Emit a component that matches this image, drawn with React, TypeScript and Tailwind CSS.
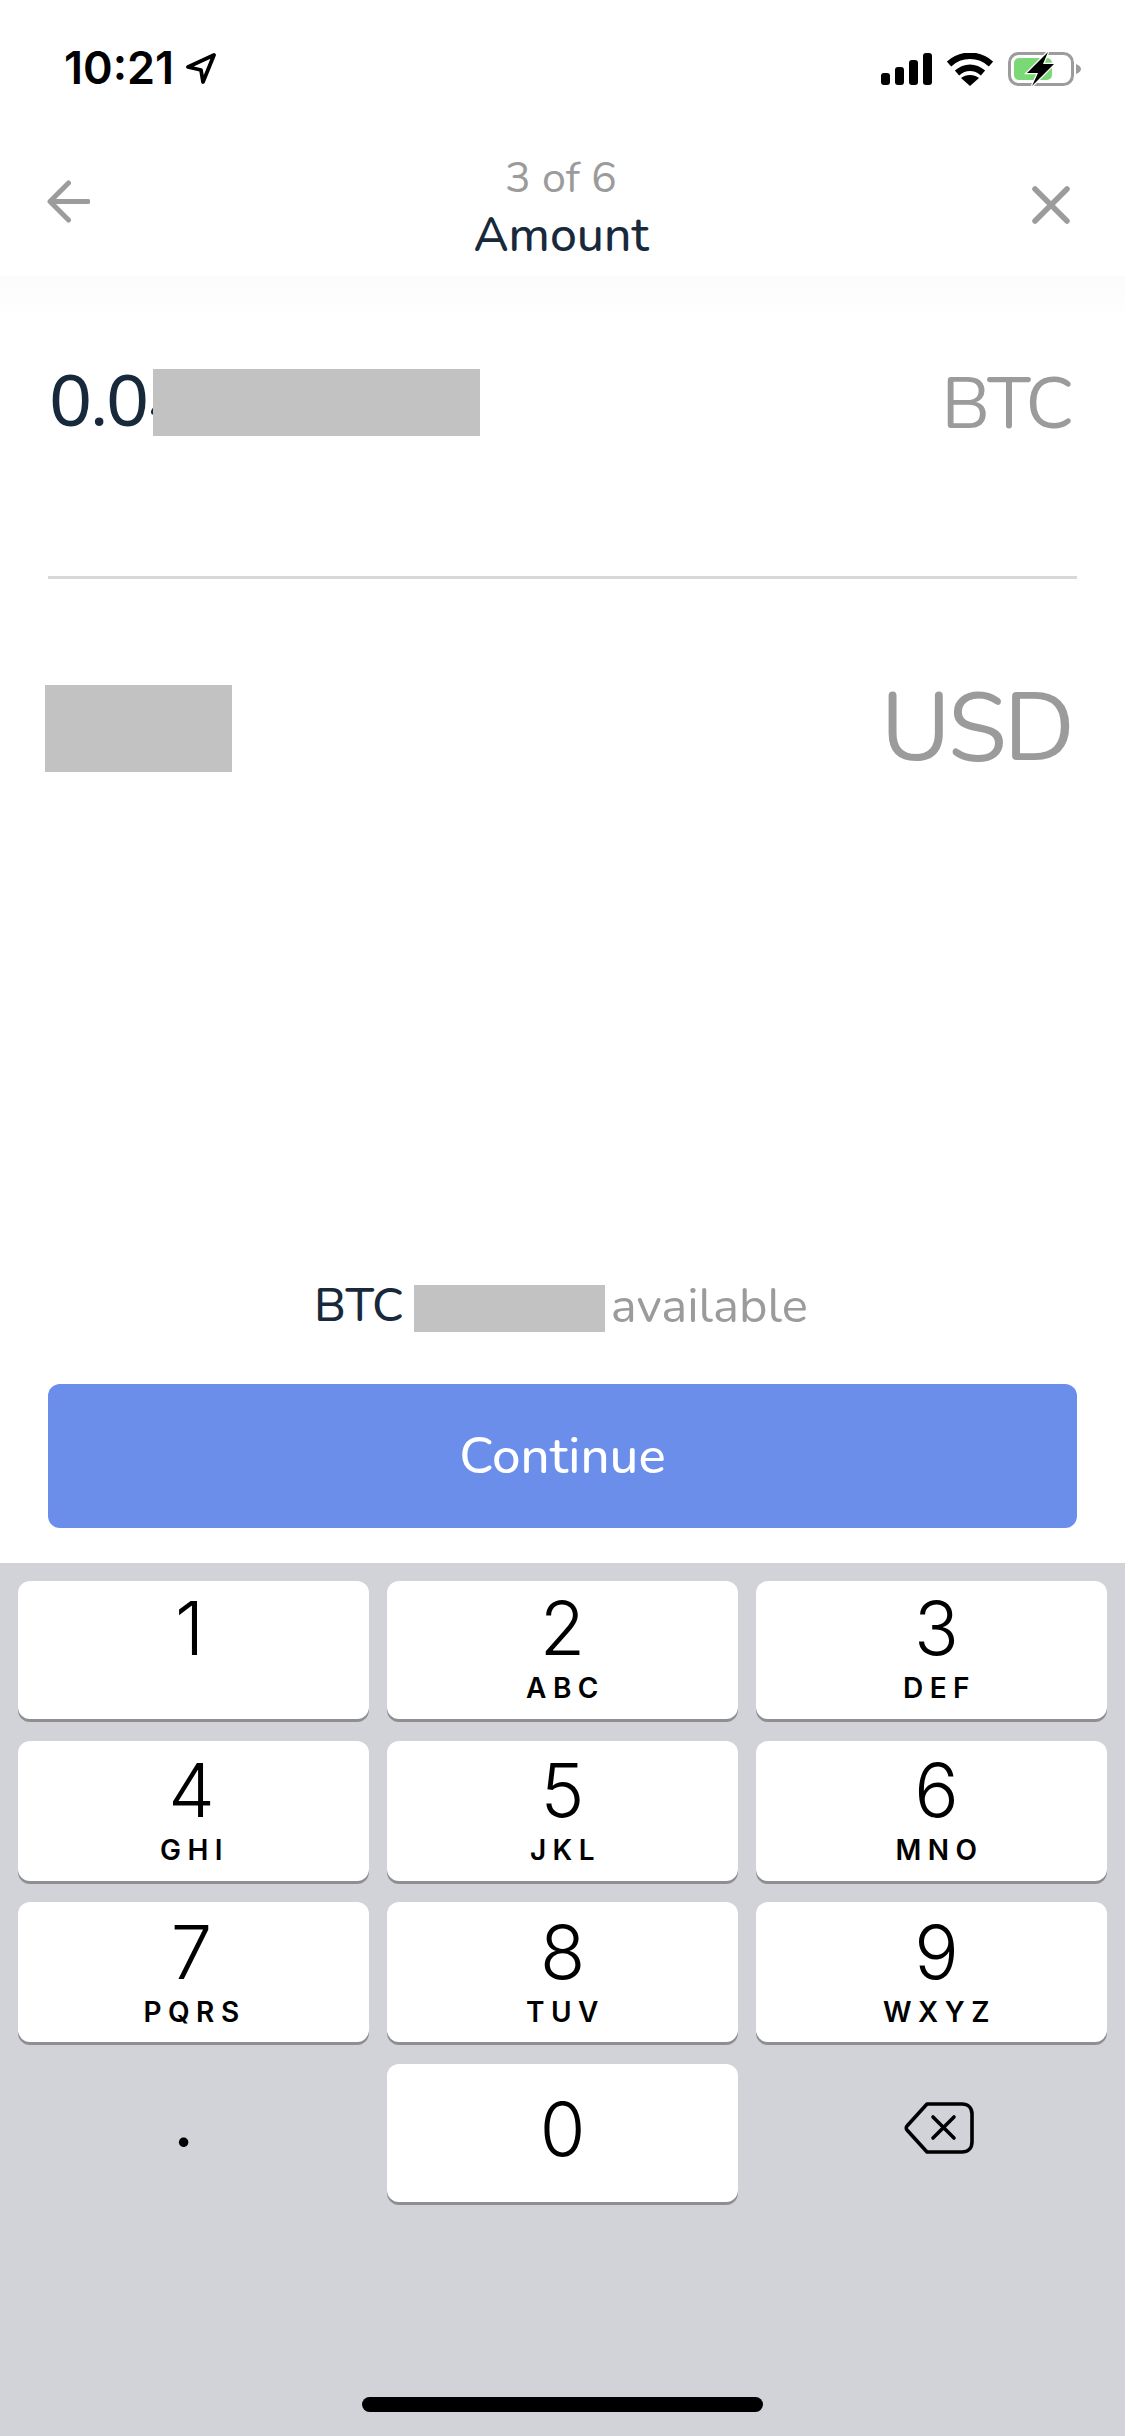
const ui = "font-['Nunito','Lato','Noto_Sans',sans-serif]";

function Signal() {
  return (
    <svg width="51" height="32" viewBox="0 0 51 32" fill="#000">
      <rect x="0" y="20" width="9" height="12" rx="3" />
      <rect x="14" y="14" width="9" height="18" rx="3" />
      <rect x="28" y="7" width="9" height="25" rx="3" />
      <rect x="42" y="0" width="9" height="32" rx="3" />
    </svg>
  );
}

function Wifi() {
  return (
    <svg width="46" height="33" viewBox="0 0 46 33" fill="none">
      <path d="M2 11 C14 0 32 0 44 11" stroke="#000" strokeWidth="6.5" strokeLinecap="butt" />
      <path d="M10 20 C18 13 28 13 36 20" stroke="#000" strokeWidth="6.5" />
      <path d="M23 33 L14 25 C19 21 27 21 32 25 Z" fill="#000" />
    </svg>
  );
}

function Battery() {
  return (
    <svg width="74" height="36" viewBox="0 0 74 36" fill="none">
      <rect x="1.5" y="2.5" width="63" height="31" rx="9" stroke="#9c9c9c" strokeWidth="3" />
      <path d="M68 13 C71 14 73 16 73 18 C73 20 71 22 68 23 Z" fill="#9c9c9c" />
      <rect x="6" y="7" width="38" height="22" rx="5" fill="#7bd975" />
      <path d="M40 1 L19 22 L30 22 L24 35 L46 13 L35 13 Z" fill="#000" stroke="#fff" strokeWidth="2.5" paintOrder="stroke" />
    </svg>
  );
}

function Loc() {
  return (
    <svg width="30" height="31" viewBox="0 0 30 31" fill="none">
      <path d="M28 2 L2 14 L15 17 L17 29 Z" stroke="#000" strokeWidth="3.8" strokeLinejoin="round" />
    </svg>
  );
}

function Key({ d, l, shift = "", top = "pt-[7px]" }: { d: string; l?: string; shift?: string; top?: string }) {
  return (
    <div className={`h-full rounded-[12px] bg-white shadow-[0_3px_0_#8e8e93] flex flex-col items-center ${top} font-['Inter',sans-serif] text-black`}>
      <span className={`text-[74px] leading-[80px] font-[350] ${shift}`}>{d}</span>
      {l ? <span className={`text-[28px] leading-[34px] font-semibold tracking-[6.5px] mt-[3px] pl-[6px] ${shift}`}>{l}</span> : null}
    </div>
  );
}

export default function App() {
  return (
    <div className={`w-[1125px] h-[2436px] bg-white flex flex-col overflow-hidden ${ui}`}>
      <div className="h-[136px] shrink-0 flex justify-between items-start pt-[51px] pl-[64px] pr-[43px]">
        <div className="flex items-center gap-[12px]">
          <span className="font-['Inter',sans-serif] font-semibold text-[45px] leading-[34px] text-black">10:21</span>
          <Loc />
        </div>
        <div className="flex items-center gap-[15px]">
          <Signal />
          <Wifi />
          <Battery />
        </div>
      </div>

      <div className="h-[140px] shrink-0 flex items-center justify-between pl-[47px] pr-[55px]">
        <svg width="43" height="43" viewBox="0 0 43 43" fill="none" className="-mt-[9px]">
          <path d="M41 21.5 H4 M21.5 3 L3 21.5 L21.5 40" stroke="#9c9c9c" strokeWidth="5" strokeLinecap="round" strokeLinejoin="round" />
        </svg>
        <div className="flex flex-col items-center mt-[2px]">
          <span className="text-[43px] leading-[56px] text-[#9b9b9b]">3 of 6</span>
          <span className="text-[48px] leading-[58px] font-medium text-[#17293b]">Amount</span>
        </div>
        <svg width="38" height="38" viewBox="0 0 38 38" fill="none" className="-mt-[2px]">
          <path d="M3 3 L35 35 M35 3 L3 35" stroke="#9c9c9c" strokeWidth="5.5" strokeLinecap="round" />
        </svg>
      </div>

      <div className="h-[44px] shrink-0 bg-gradient-to-b from-[#fbfbfb] to-white" />

      <div className="flex-1 flex flex-col px-[48px] pt-[49px]">
        <div className="h-[67px] flex items-center justify-between">
          <div className="flex items-center">
            <span className="block w-[105px] text-[72px] leading-[67px] font-medium text-[#17293b] tracking-[-1.5px] pl-[1px] whitespace-nowrap">0.04</span>
            <div className="w-[327px] h-[67px] bg-[#c2c2c2] relative" />
          </div>
          <span className="text-[72px] leading-[67px] text-[#9b9b9b] mr-[5px] mt-[4px] tracking-[-2px]">BTC</span>
        </div>
        <div className="h-[3px] bg-[#d8d8d8] mt-[140px]" />
        <div className="h-[87px] flex items-center justify-between mt-[106px]">
          <div className="w-[187px] h-[87px] bg-[#c2c2c2] -ml-[3px]" />
          <span className="text-[96px] leading-[87px] text-[#9b9b9b] mr-[5px] tracking-[-3px]">USD</span>
        </div>
        <div className="flex-1" />
        <div className="h-[47px] flex items-center justify-center pr-[3px]">
          <span className="text-[47px] leading-[47px] text-[#17293b] font-medium -mt-[6px]">BTC</span>
          <div className="w-[191px] h-[47px] bg-[#c2c2c2] ml-[10px] mr-[6px]" />
          <span className="text-[49px] leading-[47px] text-[#9b9b9b] -mt-[6px]">available</span>
        </div>
        <button className="mt-[52px] h-[144px] rounded-[12px] bg-[#6c8eeb] text-white text-[51px] font-medium flex items-center justify-center">
          Continue
        </button>
        <div className="h-[35px]" />
      </div>

      <div className="h-[873px] shrink-0 bg-[#d1d3d9] relative pt-[18px] px-[18px]">
        <div className="grid grid-cols-3 grid-rows-[138px_140px_140px_138px] gap-x-[18px] gap-y-[21.5px]">
          <Key d="1" shift="-ml-[8px]" />
          <Key d="2" l="ABC" />
          <Key d="3" l="DEF" shift="ml-[10px]" />
          <Key d="4" l="GHI" shift="-ml-[4px]" top="pt-[9px]" />
          <Key d="5" l="JKL" top="pt-[9px]" />
          <Key d="6" l="MNO" shift="ml-[10px]" top="pt-[9px]" />
          <Key d="7" l="PQRS" shift="-ml-[4px]" top="pt-[10px]" />
          <Key d="8" l="TUV" top="pt-[10px]" />
          <Key d="9" l="WXYZ" shift="ml-[10px]" top="pt-[10px]" />
          <div className="flex justify-center">
            <span className="font-['Inter',sans-serif] text-[72px] leading-[80px] text-black mr-[20px] mt-[17px]">.</span>
          </div>
          <Key d="0" top="pt-[25px]" />
          <div className="flex items-start justify-center pt-[38px] pl-[14px]">
            <svg width="70" height="52" viewBox="0 0 70 52" fill="none">
              <path d="M23 2 H58 C64 2 68 6 68 12 V40 C68 46 64 50 58 50 H23 L3 28 C2 27 2 25 3 24 Z" stroke="#000" strokeWidth="3.6" strokeLinejoin="round" />
              <path d="M29 15 L50 36 M50 15 L29 36" stroke="#000" strokeWidth="3.6" strokeLinecap="round" />
            </svg>
          </div>
        </div>
        <div className="absolute left-[362px] top-[834px] w-[401px] h-[15px] rounded-full bg-black" />
      </div>
    </div>
  );
}
